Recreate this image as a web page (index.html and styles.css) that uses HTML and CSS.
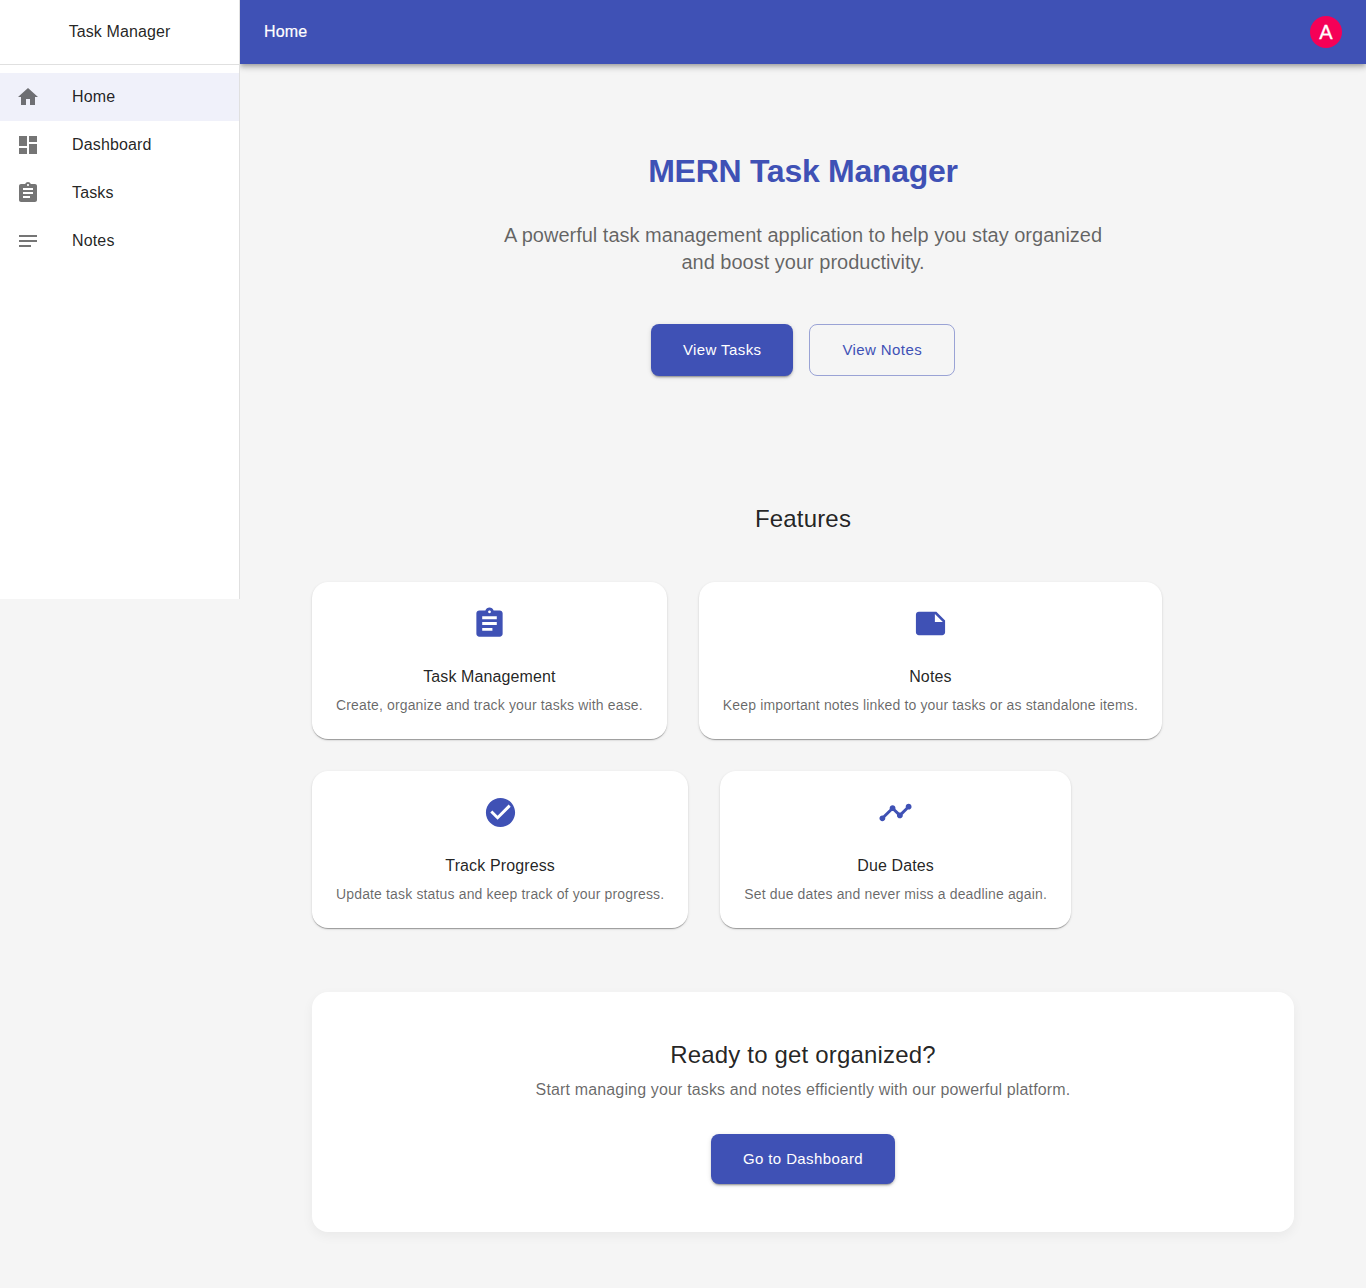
FILE: index.html
```html
<!DOCTYPE html>
<html lang="en">
<head>
<meta charset="utf-8">
<title>Task Manager</title>
<link rel="stylesheet" href="styles.css">
</head>
<body>
<div class="app">
  <aside class="sidebar">
    <div class="brand">Task Manager</div>
    <nav class="nav">
      <a class="nav-item active"><svg viewBox="0 0 24 24"><path d="M10 20v-6h4v6h5v-8h3L12 3 2 12h3v8z"/></svg><span>Home</span></a>
      <a class="nav-item"><svg viewBox="0 0 24 24"><path d="M3 13h8V3H3v10zm0 8h8v-6H3v6zm10 0h8V11h-8v10zm0-18v6h8V3h-8z"/></svg><span>Dashboard</span></a>
      <a class="nav-item"><svg viewBox="0 0 24 24"><path d="M19 3h-4.180C14.400 1.840 13.300 1 12 1c-1.300 0-2.400.84-2.820 2H5c-1.100 0-2 .9-2 2v14c0 1.100.9 2 2 2h14c1.100 0 2-.9 2-2V5c0-1.100-.9-2-2-2zm-7 0c.55 0 1 .45 1 1s-.45 1-1 1-1-.45-1-1 .45-1 1-1zm2 14H7v-2h7v2zm3-4H7v-2h10v2zm0-4H7V7h10v2z"/></svg><span>Tasks</span></a>
      <a class="nav-item"><svg viewBox="0 0 24 24"><path d="M3 18h12v-2H3v2zM3 6v2h18V6H3zm0 7h18v-2H3v2z"/></svg><span>Notes</span></a>
    </nav>
  </aside>
  <div class="page">
    <header class="appbar">
      <span class="appbar-title">Home</span>
      <span class="avatar">A</span>
    </header>
    <main class="content">
      <section class="hero">
        <h1>MERN Task Manager</h1>
        <p>A powerful task management application to help you stay organized and boost your productivity.</p>
        <div class="actions">
          <button class="btn">View Tasks</button>
          <button class="btn outlined">View Notes</button>
        </div>
      </section>
      <section class="features">
        <h2>Features</h2>
        <div class="cards">
          <article class="card">
            <svg viewBox="0 0 24 24"><path d="M19 3h-4.180C14.400 1.840 13.300 1 12 1c-1.300 0-2.400.84-2.820 2H5c-1.100 0-2 .9-2 2v14c0 1.100.9 2 2 2h14c1.100 0 2-.9 2-2V5c0-1.100-.9-2-2-2zm-7 0c.55 0 1 .45 1 1s-.45 1-1 1-1-.45-1-1 .45-1 1-1zm2 14H7v-2h7v2zm3-4H7v-2h10v2zm0-4H7V7h10v2z"/></svg>
            <h3>Task Management</h3>
            <p>Create, organize and track your tasks with ease.</p>
          </article>
          <article class="card">
            <svg viewBox="0 0 24 24"><path d="M16 4H4c-1.100 0-2 .9-2 2v12.010c0 1.100.9 1.990 2 1.990h16c1.100 0 2-.9 2-2v-8l-6-6zm-1 7V5.500l5.500 5.500H15z"/></svg>
            <h3>Notes</h3>
            <p>Keep important notes linked to your tasks or as standalone items.</p>
          </article>
          <article class="card">
            <svg viewBox="0 0 24 24"><path d="M12 2C6.480 2 2 6.480 2 12s4.480 10 10 10 10-4.480 10-10S17.520 2 12 2zm-2 15l-5-5 1.410-1.410L10 14.170l7.590-7.590L19 8l-9 9z"/></svg>
            <h3>Track Progress</h3>
            <p>Update task status and keep track of your progress.</p>
          </article>
          <article class="card">
            <svg viewBox="0 0 24 24"><path d="M23 8c0 1.100-.9 2-2 2-.18 0-.35-.02-.51-.07l-3.560 3.550c.05.16.07.34.07.52 0 1.100-.9 2-2 2s-2-.9-2-2c0-.18.02-.36.07-.52l-2.550-2.550c-.16.05-.34.07-.52.07s-.36-.02-.52-.07l-4.550 4.560c.05.16.07.33.07.51 0 1.100-.9 2-2 2s-2-.9-2-2 .9-2 2-2c.18 0 .35.02.51.07l4.560-4.550C8.020 9.360 8 9.180 8 9c0-1.100.9-2 2-2s2 .9 2 2c0 .18-.02.36-.07.52l2.550 2.550c.16-.05.34-.07.52-.07s.36.02.52.07l3.550-3.560C19.020 8.350 19 8.180 19 8c0-1.100.9-2 2-2s2 .9 2 2z"/></svg>
            <h3>Due Dates</h3>
            <p>Set due dates and never miss a deadline again.</p>
          </article>
        </div>
      </section>
      <section class="cta">
        <h2>Ready to get organized?</h2>
        <p>Start managing your tasks and notes efficiently with our powerful platform.</p>
        <button class="btn">Go to Dashboard</button>
      </section>
    </main>
  </div>
</div>
</body>
</html>
```

FILE: styles.css
```css
* { box-sizing: border-box; }
body {
  margin: 0;
  background: #f5f5f5;
  color: rgba(0, 0, 0, .87);
  font-family: "Liberation Sans", Arial, sans-serif;
  font-size: 16px;
}
h1, h2, h3, p { margin: 0; }
.app { display: flex; align-items: flex-start; min-height: 1288px; }
.sidebar {
  position: relative;
  z-index: 1;
  flex: 0 0 240px;
  height: 599px;
  background: #fff;
  border-right: 1px solid rgba(0, 0, 0, .12);
}
.brand {
  height: 65px;
  display: flex;
  align-items: center;
  justify-content: center;
  border-bottom: 1px solid rgba(0, 0, 0, .12);
  letter-spacing: .1px;
}
.nav { padding-top: 8px; }
.nav-item {
  display: flex;
  align-items: center;
  gap: 32px;
  height: 48px;
  padding: 0 16px;
  letter-spacing: .15px;
}
.nav-item.active { background: #f0f1fa; }
.nav-item svg { width: 24px; height: 24px; fill: rgba(0, 0, 0, .54); }
.nav-item span { line-height: 24px; }
.page { flex: 1; min-width: 0; }
.appbar {
  height: 64px;
  padding: 0 24px;
  display: flex;
  align-items: center;
  justify-content: space-between;
  background: #3f51b5;
  color: #fff;
  box-shadow: 0 2px 4px -1px rgba(0,0,0,.2), 0 4px 5px rgba(0,0,0,.14), 0 1px 10px rgba(0,0,0,.12);
}
.appbar-title { letter-spacing: .15px; -webkit-text-stroke: .2px #fff; }
.avatar {
  width: 32px;
  height: 32px;
  border-radius: 50%;
  background: #f50057;
  font-size: 20px;
  line-height: 32px;
  text-align: center;
  -webkit-text-stroke: .3px #fff;
}
.content { padding: 24px 72px 56px; text-align: center; }
.hero { padding: 64px 0; }
.hero h1 {
  font-size: 32px;
  line-height: 38px;
  letter-spacing: -.267px;
  color: #3f51b5;
}
.hero p {
  width: 600px;
  margin: 32px auto 0;
  font-size: 20px;
  line-height: 27px;
  color: rgba(0, 0, 0, .6);
}
.actions {
  display: flex;
  justify-content: center;
  gap: 16px;
  margin-top: 48px;
}
.btn {
  height: 50px;
  padding: 0 32px;
  border: 0;
  border-radius: 8px;
  background: #3f51b5;
  color: #fff;
  font: 15px/26px "Liberation Sans", Arial, sans-serif;
  letter-spacing: .4px;
  box-shadow: 0 3px 1px -2px rgba(0,0,0,.2), 0 2px 2px rgba(0,0,0,.14), 0 1px 5px rgba(0,0,0,.12);
}
.actions .btn { height: 52px; }
.btn.outlined {
  background: transparent;
  border: 1px solid rgba(63, 81, 181, .5);
  color: #3f51b5;
  box-shadow: none;
}
.features { padding-top: 63px; }
.features h2, .cta h2 { font-size: 24px; font-weight: 400; line-height: 32px; letter-spacing: .18px; }
.cards {
  display: flex;
  flex-wrap: wrap;
  gap: 32px;
  margin-top: 47px;
}
.card {
  height: 157px;
  padding: 24px;
  border-radius: 16px;
  background: #fff;
  box-shadow: 0 2px 1px -1px rgba(0,0,0,.2), 0 1px 1px rgba(0,0,0,.14), 0 1px 3px rgba(0,0,0,.12);
}
.card svg { display: block; width: 35px; height: 35px; margin: 0 auto; fill: #3f51b5; }
.card h3 { margin-top: 24px; font-size: 16px; font-weight: 400; line-height: 24px; letter-spacing: .12px; }
.card p { margin-top: 6px; font-size: 14px; line-height: 20px; letter-spacing: .15px; color: rgba(0,0,0,.6); }
.cta {
  height: 240px;
  margin-top: 64px;
  padding: 47px;
  border-radius: 16px;
  background: #fff;
  box-shadow: 0 4px 12px rgba(0,0,0,.05);
}
.cta p { margin-top: 7px; line-height: 24px; letter-spacing: .15px; color: rgba(0,0,0,.6); }
.cta .btn { margin-top: 32px; }
```
